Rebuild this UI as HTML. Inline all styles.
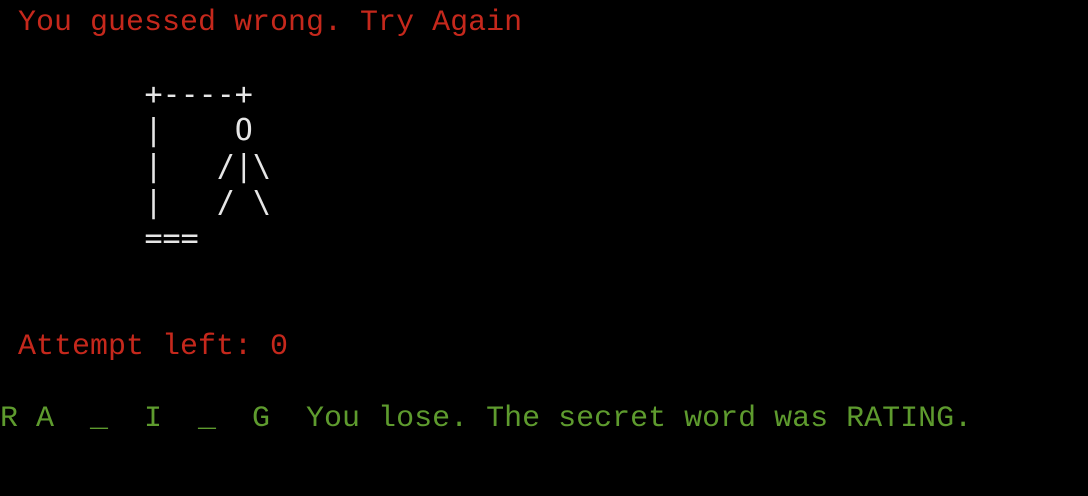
<!DOCTYPE html>
<html><head><style>
html,body{margin:0;padding:0;background:#000;width:1088px;height:496px;overflow:hidden}
.l{position:absolute;left:0;white-space:pre;font-size:30px;line-height:36px;height:36px}
.r{color:#c5281c;font-family:"Liberation Mono",monospace}
.g{color:#5e9b2e;font-family:"Liberation Mono",monospace}
.w{color:#e6e6e6;font-family:"DejaVu Sans Mono","Liberation Mono",monospace}
</style></head><body>
<div class="l r" style="top:5px"> You guessed wrong. Try Again</div>
<div class="l w" style="top:77px">        +----+</div>
<div class="l w" style="top:113px">        |    O</div>
<div class="l w" style="top:149px">        |   /|\</div>
<div class="l w" style="top:185px">        |   / \</div>
<div class="l w" style="top:221px">        ===</div>
<div class="l r" style="top:329px"> Attempt left: 0</div>
<div class="l g" style="top:401px">R A  _  I  _  G  You lose. The secret word was RATING.</div>
</body></html>
